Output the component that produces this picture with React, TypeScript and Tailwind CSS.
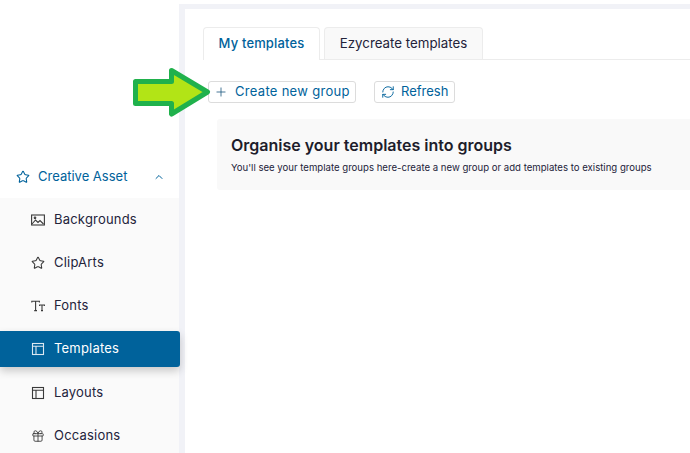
import React from "react";
import { ChevronUp, Gift, Plus, RefreshCw, Star } from "lucide-react";

type IconProps = { className?: string };

const PictureIcon = ({ className }: IconProps) => (
  <svg className={className} width="14" height="14" viewBox="0 0 14 14" fill="none" stroke="currentColor" strokeWidth="1.1">
    <rect x="0.6" y="2" width="12.8" height="10" />
    <path d="M1 11l3.5-4 2.5 2.5 2-2 3.5 3.5" />
    <circle cx="4" cy="4.8" r="0.8" />
  </svg>
);

const FontIcon = ({ className }: IconProps) => (
  <svg className={className} width="14" height="14" viewBox="0 0 14 14" fill="none" stroke="currentColor" strokeWidth="1.1">
    <path d="M0.8 3.6V2.2h7.6v1.4M4.6 2.2v9.4M3.2 11.6h2.8" />
    <path d="M8.6 7V6h4.8v1M11 6v5.6M10 11.6h2" />
  </svg>
);

const LayoutIcon = ({ className }: IconProps) => (
  <svg className={className} width="14" height="14" viewBox="0 0 14 14" fill="none" stroke="currentColor" strokeWidth="1.1">
    <rect x="1.5" y="1.5" width="11" height="11" />
    <path d="M1.5 4.2h11M5 4.2v8.3" />
  </svg>
);

const StarIcon = ({ className }: IconProps) => <Star size={14} strokeWidth={1.8} className={className} />;
const GiftIcon = ({ className }: IconProps) => <Gift size={14} strokeWidth={1.5} className={className} />;

const items = [
  { label: "Backgrounds", icon: PictureIcon },
  { label: "ClipArts", icon: StarIcon },
  { label: "Fonts", icon: FontIcon },
  { label: "Templates", icon: LayoutIcon, active: true },
  { label: "Layouts", icon: LayoutIcon },
  { label: "Occasions", icon: GiftIcon },
];

const App = () => {
  return (
    <div className="h-[453px] w-[690px] overflow-hidden bg-[#f1f2f7] font-['Inter',sans-serif] text-[#23233a]">
      <div className="h-[4px] bg-white" />
      <div className="flex h-[449px]">
        <aside className="mr-[6px] w-[179px] shrink-0 bg-white pt-[151px]">
          <div className="flex h-[43px] items-center pl-[16px] pr-[14px] text-[#00629b]">
            <Star size={14} strokeWidth={1.8} />
            <span className="ml-[8px] text-[13px]">Creative Asset</span>
            <ChevronUp size={12} strokeWidth={2} className="ml-auto" />
          </div>
          <div className="h-[300px] bg-[#fafafa]">
            {items.map((item) => (
              <div
                key={item.label}
                className={
                  item.active
                    ? "relative mb-[4px] mt-[4px] flex h-[36px] w-[180px] items-center rounded-r-[3px] bg-[#00629b] pl-[31px] text-white shadow-[0_4px_8px_rgba(0,0,0,0.2)]"
                    : "flex h-[43px] items-center pl-[31px]"
                }
              >
                <item.icon className={item.active ? "text-[#dbe8f1]" : "text-[#3a3a3a]"} />
                <span className="ml-[9px] text-[13px] tracking-[0.2px]">{item.label}</span>
              </div>
            ))}
          </div>
        </aside>
        <main className="mt-[5px] flex-1 bg-white pl-[18px] pt-[18px]">
          <div className="flex h-[33px] gap-[4px] border-b border-[#ececec]">
            <div className="flex h-[33px] w-[117px] items-center justify-center rounded-t-[4px] border border-b-0 border-[#ececec] bg-white text-[13px] font-medium tracking-[0.15px] text-[#00629b]">
              My templates
            </div>
            <div className="flex h-[32px] w-[159px] items-center justify-center rounded-t-[4px] border border-b-0 border-[#ececec] bg-[#f9f9f9] text-[13.3px]">
              Ezycreate templates
            </div>
          </div>
          <div className="ml-[5px] mt-[21px] flex gap-[18px] text-[13px] text-[#00629b]">
            <button className="flex h-[22px] w-[148px] items-center rounded-[3px] border border-[#dcdcdc] pl-[5px]">
              <Plus size={14} strokeWidth={1.4} className="text-[#1f5a80]" />
              <span className="ml-[7px] tracking-[0.3px]">Create new group</span>
            </button>
            <button className="flex h-[22px] w-[81px] items-center rounded-[3px] border border-[#dcdcdc] pl-[6px]">
              <RefreshCw size={14} strokeWidth={1.6} />
              <span className="ml-[6px]">Refresh</span>
            </button>
          </div>
          <div className="ml-[14px] mt-[16px] h-[71px] rounded-l-[3px] bg-[#f9f9f9] pl-[14px] pt-[15px]">
            <h2 className="text-[16px] font-semibold leading-[22px] text-[#1d1d2b]">Organise your templates into groups</h2>
            <p className="mt-[5px] text-[9.6px] leading-[14px]">
              You'll see your template groups here-create a new group or add templates to existing groups
            </p>
          </div>
        </main>
      </div>
      <svg className="absolute left-[132px] top-[68px]" width="80" height="49" viewBox="0 0 80 49">
        <polygon
          points="3.5,13.5 39.5,13.5 39.5,2.5 75.5,24 39.5,46 39.5,35.5 3.5,35.5"
          fill="#b2e416"
          stroke="#20b14c"
          strokeWidth="5"
          strokeLinejoin="round"
        />
      </svg>
    </div>
  );
};

export default App;
